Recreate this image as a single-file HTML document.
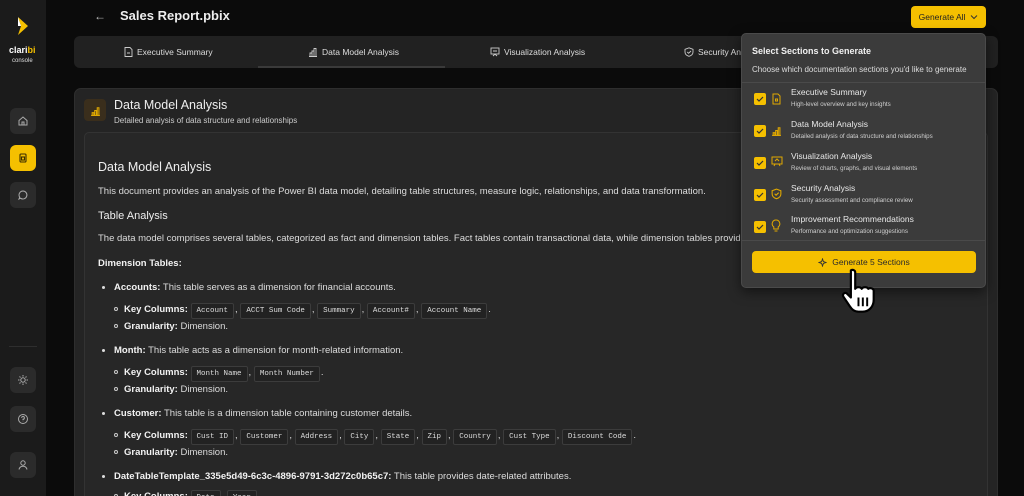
<!DOCTYPE html>
<html><head><meta charset="utf-8"><style>
*{margin:0;padding:0;box-sizing:border-box}
html{width:1024px;height:496px;overflow:hidden}
body{width:1024px;height:496px;overflow:hidden;background:#0b0b0b;font-family:"Liberation Sans",sans-serif;color:#e6e6e6;position:relative}
.a{position:absolute;white-space:nowrap}
.sb{position:absolute;left:0;top:0;width:46px;height:496px;background:#1b1b1b}
.nb{position:absolute;left:10px;width:26px;height:26px;border-radius:6px;background:#2b2b2b;display:flex;align-items:center;justify-content:center}
.tabs{position:absolute;left:74px;top:36px;width:924px;height:32px;background:#212121;border-radius:6px}
.tab{position:absolute;top:0;height:32px;font-size:8.5px;color:#ddd;display:flex;align-items:center;gap:4px}
.card{position:absolute;left:74px;top:88px;width:924px;height:420px;background:#242424;border-radius:7px;border:1px solid #2e2e2e}
.inner{position:absolute;left:84px;top:132px;width:904px;height:380px;background:#272727;border:1px solid #333;border-radius:5px}
.t{font-size:9.5px;color:#dcdcdc}
b{color:#f2f2f2}
code{font-family:"Liberation Mono",monospace;font-size:7.5px;border:1px solid #3c3c3c;background:#222;border-radius:2px;padding:3px 5px;color:#ddd;margin-right:1px}
.dot{display:inline-block;width:3px;height:3px;background:#ddd;border-radius:50%;margin-right:9px;vertical-align:middle}
.cir{display:inline-block;width:4px;height:4px;border:1px solid #ccc;border-radius:50%;margin-right:6px;vertical-align:middle}
.pop{position:absolute;left:741px;top:33px;width:245px;height:255px;background:#3b3b3b;border:1px solid #4a4a4a;border-radius:5px;box-shadow:0 4px 12px rgba(0,0,0,.5)}
.cb{position:absolute;left:12px;width:12px;height:12px;background:#f5c000;border-radius:2px;display:flex;align-items:center;justify-content:center}
.it1{position:absolute;left:49px;font-size:8.5px;color:#e8e8e8;white-space:nowrap}
.it2{position:absolute;left:49px;font-size:6.2px;color:#cfcfcf;white-space:nowrap}
.ic{position:absolute;left:29px}
</style></head><body>
<div class="sb">
 <svg class="a" style="left:16px;top:15px" width="14" height="22" viewBox="0 0 14 22"><path d="M2 2 L12 11 L2 20 L5 11Z" fill="#f5c000"/><path d="M2 2 L5 11 L2 11Z" fill="#fff"/></svg>
 <div class="a" style="left:9px;top:45px;font-size:9px;font-weight:bold;color:#fff">clari<span style="color:#f5c000">bi</span></div>
 <div class="a" style="left:12px;top:58px;font-size:6px;color:#ddd">console</div>
 <div class="nb" style="top:108px"><svg width="12" height="12" viewBox="0 0 12 12" fill="none" stroke="#aaa" stroke-width="1"><path d="M2 5.5 L6 2 L10 5.5 V10 H2Z M5 10 V7 H7 V10"/></svg></div>
 <div class="nb" style="top:145px;background:#f5c000"><svg width="12" height="12" viewBox="0 0 12 12" fill="none" stroke="#3a2d00" stroke-width="1.1"><rect x="3" y="2" width="6" height="8" rx="1"/><rect x="4.5" y="5" width="3" height="3"/></svg></div>
 <div class="nb" style="top:182px"><svg width="12" height="12" viewBox="0 0 12 12" fill="none" stroke="#aaa" stroke-width="1"><path d="M6 2a4 4 0 1 1-2.5 7.2L2 10l.7-1.8A4 4 0 0 1 6 2z"/></svg></div>
 <div class="a" style="left:9px;top:346px;width:28px;height:1px;background:#2e2e2e"></div>
 <div class="nb" style="top:367px"><svg width="12" height="12" viewBox="0 0 12 12" fill="none" stroke="#aaa" stroke-width="1"><circle cx="6" cy="6" r="2.2"/><path d="M6 1v1.5M6 9.5V11M1 6h1.5M9.5 6H11M2.5 2.5l1 1M8.5 8.5l1 1M2.5 9.5l1-1M8.5 3.5l1-1"/></svg></div>
 <div class="nb" style="top:406px"><svg width="12" height="12" viewBox="0 0 12 12" fill="none" stroke="#aaa" stroke-width="1"><circle cx="6" cy="6" r="4.5"/><path d="M4.6 4.8a1.4 1.4 0 1 1 1.4 1.5V7.3M6 8.6v.3"/></svg></div>
 <div class="nb" style="top:452px"><svg width="12" height="12" viewBox="0 0 12 12" fill="none" stroke="#aaa" stroke-width="1"><circle cx="6" cy="4" r="2.2"/><path d="M2 10.5c.5-2.3 2-3.3 4-3.3s3.5 1 4 3.3"/></svg></div>
</div>

<div class="a" style="left:94px;top:9px;font-size:12px;color:#bbb">←</div>
<div class="a" style="left:120px;top:8px;font-size:13px;font-weight:bold;color:#eee">Sales Report.pbix</div>
<div class="a" style="left:911px;top:6px;width:75px;height:22px;background:#f5c000;border-radius:4px;font-size:8.5px;color:#222;display:flex;align-items:center;justify-content:center;gap:5px">Generate All <svg width="8" height="6" viewBox="0 0 8 6" fill="none" stroke="#333" stroke-width="1"><path d="M1 1.5l3 3 3-3"/></svg></div>

<div class="tabs">
 <div class="tab" style="left:50px"><svg width="9" height="10" viewBox="0 0 9 10" fill="none" stroke="#ccc" stroke-width=".9"><path d="M1 .5h5l2 2v7H1z M3 6h3"/></svg>Executive Summary</div>
 <div class="tab" style="left:234px"><svg width="10" height="10" viewBox="0 0 10 10" fill="none" stroke="#ccc" stroke-width=".9"><path d="M1 9.5h8M2 9V6h2v3M4 9V4h2v5M6 9V1.5h2V9"/></svg>Data Model Analysis</div>
 <div class="a" style="left:184px;top:30px;width:187px;height:2px;background:#3a3a3a"></div>
 <div class="tab" style="left:416px"><svg width="10" height="10" viewBox="0 0 10 10" fill="none" stroke="#ccc" stroke-width=".9"><rect x="1" y="1" width="8" height="6"/><path d="M3 9l2-2 2 2M3 4h4"/></svg>Visualization Analysis</div>
 <div class="tab" style="left:610px"><svg width="10" height="10" viewBox="0 0 10 10" fill="none" stroke="#ccc" stroke-width=".9"><path d="M5 .8L9 2.3V5c0 2.3-2 3.7-4 4.3C3 8.7 1 7.3 1 5V2.3z M3.3 5l1.3 1.3L7 4"/></svg>Security Ana</div>
</div>

<div class="card"></div>
<div class="a" style="left:84px;top:99px;width:22px;height:22px;background:#3a2e1c;border-radius:4px;display:flex;align-items:center;justify-content:center"><svg width="11" height="11" viewBox="0 0 10 10" fill="none" stroke="#e0a800" stroke-width="1"><path d="M1 9.5h8M2 9V7h1.5v2M4.3 9V5h1.5v4M6.6 9V2.5h1.5V9"/></svg></div>
<div class="a" style="left:114px;top:98px;font-size:12.5px;color:#eee">Data Model Analysis</div>
<div class="a" style="left:114px;top:116px;font-size:8px;color:#ccc">Detailed analysis of data structure and relationships</div>
<div class="inner"></div>

<div class="a" style="left:98px;top:160px;font-size:12.5px;color:#eee">Data Model Analysis</div>
<div class="a t" style="left:98px;top:186px">This document provides an analysis of the Power BI data model, detailing table structures, measure logic, relationships, and data transformation.</div>
<div class="a" style="left:98px;top:210px;font-size:11px;color:#eee">Table Analysis</div>
<div class="a t" style="left:98px;top:233px">The data model comprises several tables, categorized as fact and dimension tables. Fact tables contain transactional data, while dimension tables provide context</div>
<div class="a t" style="left:98px;top:258px"><b>Dimension Tables:</b></div>

<div class="a t" style="left:102px;top:282px"><span class="dot"></span><b>Accounts:</b> This table serves as a dimension for financial accounts.</div>
<div class="a t" style="left:114px;top:304px"><span class="cir"></span><b>Key Columns:</b> <code>Account</code>, <code>ACCT Sum Code</code>, <code>Summary</code>, <code>Account#</code>, <code>Account Name</code>.</div>
<div class="a t" style="left:114px;top:321px"><span class="cir"></span><b>Granularity:</b> Dimension.</div>
<div class="a t" style="left:102px;top:345px"><span class="dot"></span><b>Month:</b> This table acts as a dimension for month-related information.</div>
<div class="a t" style="left:114px;top:367px"><span class="cir"></span><b>Key Columns:</b> <code>Month Name</code>, <code>Month Number</code>.</div>
<div class="a t" style="left:114px;top:384px"><span class="cir"></span><b>Granularity:</b> Dimension.</div>
<div class="a t" style="left:102px;top:408px"><span class="dot"></span><b>Customer:</b> This table is a dimension table containing customer details.</div>
<div class="a t" style="left:114px;top:430px"><span class="cir"></span><b>Key Columns:</b> <code>Cust ID</code>, <code>Customer</code>, <code>Address</code>, <code>City</code>, <code>State</code>, <code>Zip</code>, <code>Country</code>, <code>Cust Type</code>, <code>Discount Code</code>.</div>
<div class="a t" style="left:114px;top:447px"><span class="cir"></span><b>Granularity:</b> Dimension.</div>
<div class="a t" style="left:102px;top:471px"><span class="dot"></span><b>DateTableTemplate_335e5d49-6c3c-4896-9791-3d272c0b65c7:</b> This table provides date-related attributes.</div>
<div class="a t" style="left:114px;top:491px"><span class="cir"></span><b>Key Columns:</b> <code>Date</code>, <code>Year</code></div>

<div class="pop">
 <div class="a" style="left:10px;top:12px;font-size:9px;font-weight:bold;color:#f0f0f0">Select Sections to Generate</div>
 <div class="a" style="left:10px;top:31px;font-size:8px;color:#ddd">Choose which documentation sections you'd like to generate</div>
 <div class="a" style="left:0;top:48px;width:243px;height:1px;background:#4a4a4a"></div>

 <div class="cb" style="top:59px"><svg width="8" height="8" viewBox="0 0 8 8" fill="none" stroke="#333" stroke-width="1.2"><path d="M1 4l2 2 4-4"/></svg></div>
 <svg class="ic" style="top:59px" width="11" height="12" viewBox="0 0 10 12" fill="none" stroke="#e0a800" stroke-width="1"><path d="M1.5 1h5l2 2v8h-7z"/><rect x="4" y="6" width="2" height="2"/></svg>
 <div class="it1" style="top:53px">Executive Summary</div><div class="it2" style="top:67px">High-level overview and key insights</div>

 <div class="cb" style="top:91px"><svg width="8" height="8" viewBox="0 0 8 8" fill="none" stroke="#333" stroke-width="1.2"><path d="M1 4l2 2 4-4"/></svg></div>
 <svg class="ic" style="top:91px" width="11" height="11" viewBox="0 0 10 10" fill="none" stroke="#e0a800" stroke-width="1"><path d="M1 9.5h8M2 9V7h1.5v2M4.3 9V5h1.5v4M6.6 9V2.5h1.5V9"/></svg>
 <div class="it1" style="top:85px">Data Model Analysis</div><div class="it2" style="top:99px">Detailed analysis of data structure and relationships</div>

 <div class="cb" style="top:123px"><svg width="8" height="8" viewBox="0 0 8 8" fill="none" stroke="#333" stroke-width="1.2"><path d="M1 4l2 2 4-4"/></svg></div>
 <svg class="ic" style="top:122px" width="12" height="11" viewBox="0 0 12 11" fill="none" stroke="#e0a800" stroke-width="1"><rect x="1" y="1" width="10" height="7"/><path d="M3 10l1-2M9 10l-1-2M4 5l2-2 2 2"/></svg>
 <div class="it1" style="top:117px">Visualization Analysis</div><div class="it2" style="top:131px">Review of charts, graphs, and visual elements</div>

 <div class="cb" style="top:155px"><svg width="8" height="8" viewBox="0 0 8 8" fill="none" stroke="#333" stroke-width="1.2"><path d="M1 4l2 2 4-4"/></svg></div>
 <svg class="ic" style="top:154px" width="11" height="12" viewBox="0 0 10 11" fill="none" stroke="#e0a800" stroke-width="1"><path d="M5 1L9 2.5V5.5c0 2.3-2 3.7-4 4.3C3 9.2 1 7.8 1 5.5V2.5z M3.3 5.3l1.3 1.3L7 4.3"/></svg>
 <div class="it1" style="top:149px">Security Analysis</div><div class="it2" style="top:163px">Security assessment and compliance review</div>

 <div class="cb" style="top:187px"><svg width="8" height="8" viewBox="0 0 8 8" fill="none" stroke="#333" stroke-width="1.2"><path d="M1 4l2 2 4-4"/></svg></div>
 <svg class="ic" style="top:185px" width="10" height="13" viewBox="0 0 10 13" fill="none" stroke="#e0a800" stroke-width="1"><path d="M5 1a3.8 3.8 0 0 0-2.2 6.9V10h4.4V7.9A3.8 3.8 0 0 0 5 1zM3.5 12h3"/></svg>
 <div class="it1" style="top:180px">Improvement Recommendations</div><div class="it2" style="top:194px">Performance and optimization suggestions</div>

 <div class="a" style="left:0;top:206px;width:243px;height:1px;background:#4a4a4a"></div>
 <div class="a" style="left:10px;top:217px;width:224px;height:22px;background:#f5c000;border-radius:4px;display:flex;align-items:center;justify-content:center;gap:5px;font-size:8.5px;color:#2a2a2a">
  <svg width="9" height="9" viewBox="0 0 10 10" fill="none" stroke="#333" stroke-width="1"><path d="M5 1L6 4 9 5 6 6 5 9 4 6 1 5 4 4z"/></svg>Generate 5 Sections</div>
</div>

<svg class="a" style="left:840px;top:266px" width="50" height="50" viewBox="0 0 46 46"><path d="M10 4c2-1 4 0 4 2v15c1-2 5-2 6 0 1-2 5-2 6 0 1-1 5-1 5 2v8c0 6-4 11-10 11h-4c-4 0-6-2-8-5L3 28c-1-2 1-4 3-3l4 4V6z" fill="#fff" stroke="#000" stroke-width="2" stroke-linejoin="round"/><path d="M17 29v8M21 29v8M25 29v8" stroke="#000" stroke-width="1.8"/></svg>
</body></html>
